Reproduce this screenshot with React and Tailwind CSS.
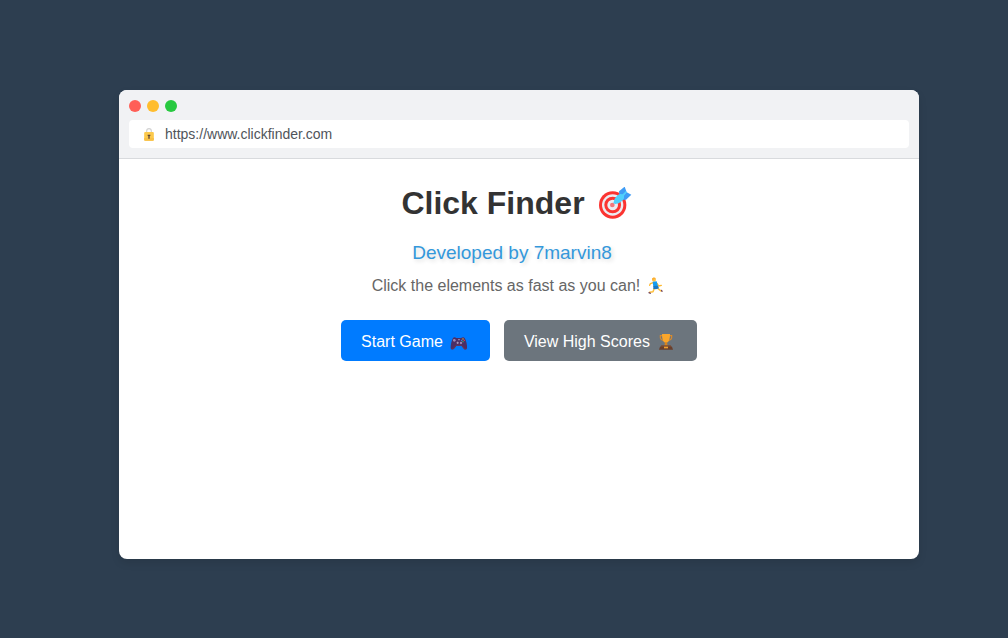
import { useState } from 'react'

const dots = [
  { label: 'Close', color: 'bg-[#ff5f57]' },
  { label: 'Minimize', color: 'bg-[#ffbd2e]' },
  { label: 'Maximize', color: 'bg-[#28c940]' },
]

function LockIcon() {
  return (
    <svg viewBox="21 19 36 42" className="w-3 h-[14px] shrink-0" aria-hidden="true">
      <path d="M32 37v-6a7 7 0 0 1 14 0v6" fill="none" stroke="#d2d2d2" strokeWidth="3.5" />
      <rect x="24.5" y="34" width="29" height="26" rx="3" fill="#fcc94c" />
      <path d="M24.5 52h29v5a3 3 0 0 1-3 3h-23a3 3 0 0 1-3-3z" fill="#f8c044" />
      <path d="M35 42h8v4h-2v8h-4v-8h-2z" fill="#5d4638" />
    </svg>
  )
}

function TargetIcon() {
  return (
    <svg viewBox="9 21 132 96" className="w-11 h-8" aria-hidden="true">
      <circle cx="68" cy="75" r="41" fill="#fb3431" />
      <circle cx="68" cy="75" r="32" fill="#ececf2" />
      <circle cx="68" cy="75" r="25" fill="#fb3431" />
      <circle cx="68" cy="75" r="16" fill="#ececf2" />
      <circle cx="67" cy="75" r="7" fill="#f4777c" />
      <path d="M88 46l-1-12 17-14 5 14-9 14z" fill="#3f9cf5" />
      <path d="M97 50l12-14 15 8-16 15-12 1z" fill="#3f9cf5" />
      <path d="M70 70l4-14 9-11 8-3 7 1 10-10 3 3-9 11v8l-5 7-11 8-10 2z" fill="#4fd0fb" />
    </svg>
  )
}

function RunnerIcon() {
  return (
    <svg viewBox="12 18 66 57" className="w-[22px] h-[19px]" aria-hidden="true">
      <g fill="none" strokeLinecap="round" strokeLinejoin="round">
        <path d="M40 35l-9 3-2 5" stroke="#ffb92e" strokeWidth="4" />
        <path d="M51 37l5 8 8-2" stroke="#ffb92e" strokeWidth="4" />
        <path d="M43 52l-4 10-10 2" stroke="#fdbf3c" strokeWidth="4.5" />
        <path d="M51 51l6 4 6 5" stroke="#fdbf3c" strokeWidth="4.5" />
        <path d="M27 65l4 2M65 58l1 3" stroke="#5d2c4f" strokeWidth="3.5" />
      </g>
      <circle cx="42" cy="26" r="6" fill="#ffc145" />
      <path d="M36 24c1-5 8-6 12-2l-7 3-2 4z" fill="#fbae32" />
      <path d="M38 32l12-1 4 15-14 1z" fill="#159cf0" />
      <path d="M40 45l14-1 3 8-9 3-8-1z" fill="#1877c4" />
    </svg>
  )
}

function GamepadIcon() {
  return (
    <svg viewBox="9 18 66 48" className="w-[22px] h-4" aria-hidden="true">
      <path
        d="M24 30c3-3 7-2 10 0h14c4-2 8-3 11 0 5 8 8 22 7 30-1 6-6 6-9 2l-7-9H34l-7 9c-4 4-10 3-10-3 0-10 3-22 7-29z"
        fill="#4c2e66"
      />
      <path d="M19 56c0 6 4 7 7 3l7-9h17l8 9c3 4 6 3 7-1-1 7-6 8-9 4l-7-9H34l-7 9c-4 4-9 2-8-6z" fill="#6b3353" />
      <circle cx="28" cy="37" r="4" fill="#9a8ab8" />
      <path d="M38 41v7M34.500 44.500h7" stroke="#b7a9c8" strokeWidth="2.500" />
      <circle cx="48" cy="45" r="3.500" fill="#9a8ab8" />
      <circle cx="42" cy="35" r="2" fill="#c6bdd5" />
      <circle cx="54" cy="33" r="2" fill="#f5c236" />
      <circle cx="58" cy="37" r="2" fill="#ed4b42" />
      <circle cx="50" cy="37" r="2" fill="#3c9fee" />
      <circle cx="54" cy="41" r="2" fill="#3fc86a" />
    </svg>
  )
}

function TrophyIcon() {
  return (
    <svg viewBox="9 12 66 54" className="w-[22px] h-[18px]" aria-hidden="true">
      <path d="M32 20h-7c-1 8 3 14 11 15M52 20h7c1 8-3 14-11 15" fill="none" stroke="#d98a2b" strokeWidth="3.500" />
      <path d="M30 15h24c0 14-2 22-9 26v8h-6v-8c-7-4-9-12-9-26z" fill="#fba62a" />
      <path d="M39 40h6l2 11H37z" fill="#d58422" />
      <path d="M28 49h28l3 5H25z" fill="#7d4d33" />
      <path d="M24 53h36l3 9H21z" fill="#693f2c" />
      <rect x="36" y="53" width="12" height="5" fill="#f0a030" />
    </svg>
  )
}

export default function App() {
  const [url, setUrl] = useState('https://www.clickfinder.com')

  return (
    <main className="min-h-screen flex items-center justify-center bg-[#2d3e50] pl-[30px] pt-[11px] font-['Liberation_Sans',Arial,sans-serif]">
      <div className="w-full max-w-[800px] rounded-lg bg-white shadow-[0_4px_8px_rgba(0,0,0,0.1)] overflow-hidden">
        {/* Browser bar */}
        <header className="flex flex-col gap-2 p-[10px] bg-[#f1f2f4] border-b border-[#d8dadd]">
          <div className="flex gap-[6px]">
            {dots.map(({ label, color }) => (
              <button key={label} aria-label={label} className={`w-3 h-3 rounded-full ${color}`} />
            ))}
          </div>
          <label className="flex items-center gap-[10px] h-7 px-[14px] rounded bg-white">
            <LockIcon />
            <input
              type="text"
              aria-label="Address"
              value={url}
              onChange={e => setUrl(e.target.value)}
              className="flex-1 min-w-0 bg-transparent text-sm text-[#50545a] outline-none"
            />
          </label>
        </header>

        {/* Page content */}
        <section className="min-h-[400px] p-5 text-center">
          <h1 className="flex items-center justify-center gap-2 text-[32px] leading-12 font-bold text-[#333333]">
            Click Finder
            <TargetIcon />
          </h1>
          <p className="mt-3 pr-[14px] text-[19px] leading-7 text-[#3498db] [text-shadow:2px_2px_4px_rgba(0,0,0,0.15)]">
            Developed by 7marvin8
          </p>
          <p className="mt-[9px] flex items-center justify-center gap-1 text-base leading-5 text-[#666666]">
            Click the elements as fast as you can!
            <RunnerIcon />
          </p>
          <div className="mt-6 flex flex-wrap justify-center gap-[14px]">
            <button className="flex items-center gap-[5px] h-[41px] px-5 pt-[2px] rounded-[5px] bg-[#007bff] text-base text-white">
              Start Game
              <GamepadIcon />
            </button>
            <button className="flex items-center gap-[5px] h-[41px] px-5 pt-[2px] rounded-[5px] bg-[#6c757d] text-base text-white">
              View High Scores
              <TrophyIcon />
            </button>
          </div>
        </section>
      </div>
    </main>
  )
}
